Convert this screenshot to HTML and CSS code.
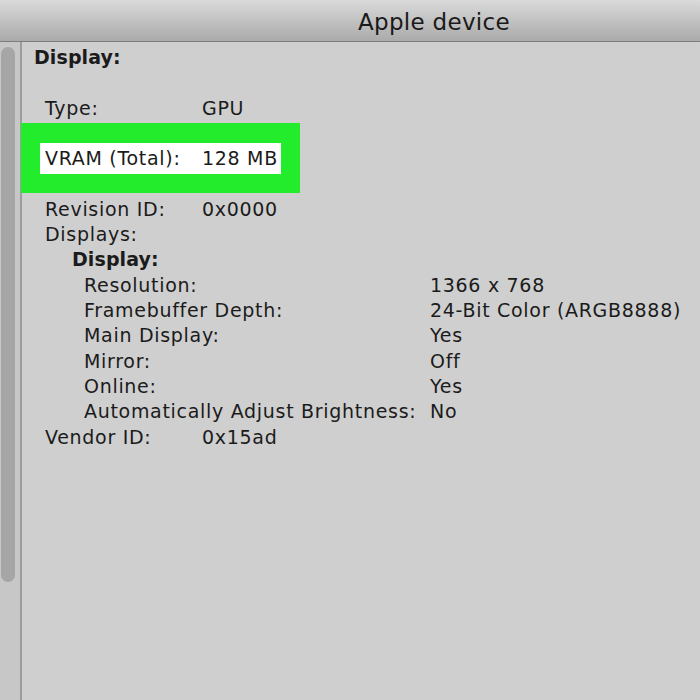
FILE: index.html
```html
<!DOCTYPE html>
<html>
<head>
<meta charset="utf-8">
<link rel="stylesheet" href="styles.css">
</head>
<body>
<div class="window">
  <header class="titlebar"><span class="title">Apple device</span></header>
  <div class="main">
    <div class="scroll"><div class="thumb"></div></div>
    <div class="content">
      <div class="heading">Display:</div>
      <div class="blank"></div>
      <div class="row"><span class="lab">Type:</span><span>GPU</span></div>
      <div class="hl">
        <div class="hl-inner"><span class="lab2">VRAM (Total):</span><span>128 MB</span></div>
      </div>
      <div class="row"><span class="lab">Revision ID:</span><span>0x0000</span></div>
      <div class="row"><span class="lab">Displays:</span><span></span></div>
      <div class="subhead">Display:</div>
      <div class="sub"><span class="slab">Resolution:</span><span>1366 x 768</span></div>
      <div class="sub"><span class="slab">Framebuffer Depth:</span><span>24-Bit Color (ARGB8888)</span></div>
      <div class="sub"><span class="slab">Main Display:</span><span>Yes</span></div>
      <div class="sub"><span class="slab">Mirror:</span><span>Off</span></div>
      <div class="sub"><span class="slab">Online:</span><span>Yes</span></div>
      <div class="sub"><span class="slab">Automatically Adjust Brightness:</span><span>No</span></div>
      <div class="row"><span class="lab">Vendor ID:</span><span>0x15ad</span></div>
    </div>
  </div>
</div>
</body>
</html>
```
FILE: styles.css
```css
html, body {
  margin: 0;
  padding: 0;
}
body {
  width: 700px;
  height: 700px;
  overflow: hidden;
  background: #cfcfcf;
  font-family: "DejaVu Sans", "Liberation Sans", sans-serif;
  color: #1b1b1b;
}
.window {
  display: flex;
  flex-direction: column;
  height: 700px;
}
.titlebar {
  border-bottom: 1px solid #7e7e7e;
  background: linear-gradient(#dadada, #aaaaaa);
  box-sizing: border-box;
  padding-left: 358px;
  display: flex;
  align-items: center;
  flex: none;
  height: 42px;
}
.title {
  font-size: 23px;
  letter-spacing: 0.3px;
  color: #1a1a1a;
  position: relative;
  top: 1px;
}
.main {
  flex: 1;
  display: flex;
}
.scroll {
  width: 20px;
  flex: none;
  background: #c7c7c7;
  border-right: 2px solid #9d9d9d;
  padding-top: 5px;
  box-sizing: content-box;
}
.thumb {
  margin-left: 1px;
  width: 14px;
  height: 535px;
  background: #a6a6a6;
  border-radius: 7px;
}
.content {
  flex: 1;
  padding-top: 3px;
  font-size: 19px;
  letter-spacing: 0.7px;
  line-height: 25.3px;
  white-space: nowrap;
}
.heading {
  font-weight: bold;
  letter-spacing: 0.1px;
  padding-left: 12px;
}
.blank {
  height: 25.3px;
}
.row {
  display: grid;
  grid-template-columns: 157px auto;
  padding-left: 23px;
}
.hl {
  margin: 2px 0 4px -1px;
  height: 70px;
  width: 279px;
  background: #22ec2c;
  box-sizing: border-box;
  padding: 20px 0 0 19px;
}
.hl-inner {
  background: #ffffff;
  width: 241px;
  height: 31px;
  box-sizing: border-box;
  padding-left: 5px;
  display: grid;
  grid-template-columns: 157px auto;
  line-height: 31px;
}
.subhead {
  font-weight: bold;
  letter-spacing: 0.1px;
  padding-left: 50px;
}
.sub {
  display: grid;
  grid-template-columns: 346px auto;
  padding-left: 62px;
}
```
